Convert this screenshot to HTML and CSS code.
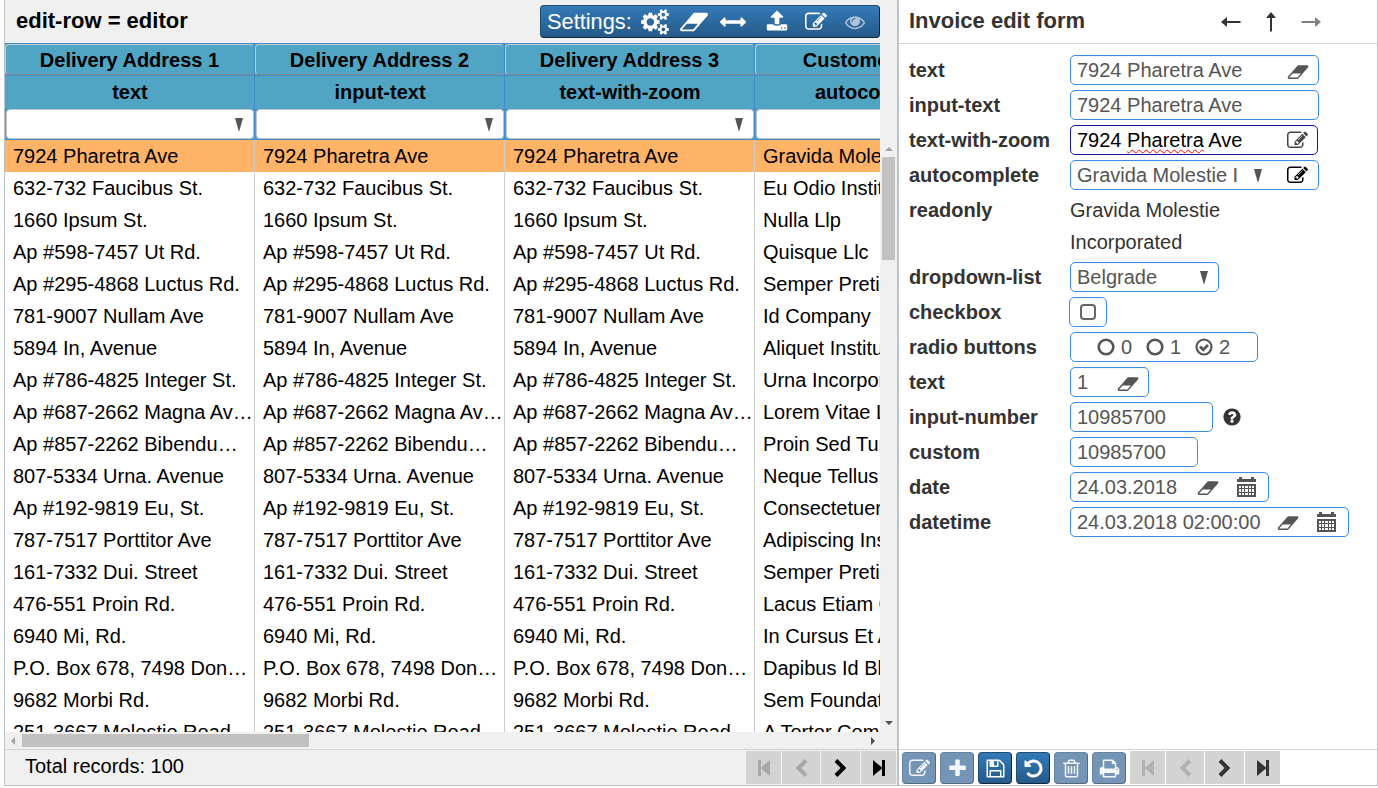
FILE: index.html
```html
<!DOCTYPE html>
<html lang="en">
<head>
<meta charset="utf-8">
<title>Invoice editor</title>
<link rel="stylesheet" href="styles.css">
</head>
<body>
<svg class="defs" aria-hidden="true">
  <symbol id="cogs" viewBox="0 0 1920 1792"><path d="M896 896q0-106-75-181t-181-75-181 75-75 181 75 181 181 75 181-75 75-181zm768 512q0-52-38-90t-90-38-90 38-38 90q0 53 37.500 90.500t90.500 37.500 90.500-37.500 37.500-90.500zm0-1024q0-52-38-90t-90-38-90 38-38 90q0 53 37.500 90.500t90.500 37.500 90.500-37.500 37.500-90.500zm-384 421v185q0 10-7 19.500t-16 10.500l-155 24q-11 35-32 76 34 48 90 115 7 11 7 20 0 12-7 19-23 30-82.500 89.500t-78.500 59.500q-11 0-21-7l-115-90q-37 19-77 31-11 108-23 155-7 24-30 24h-186q-11 0-20-7.500t-10-17.500l-23-153q-34-10-75-31l-118 89q-7 7-20 7-11 0-21-8-144-133-144-160 0-9 7-19 10-14 41-53t47-61q-23-44-35-82l-152-24q-10-1-17-9.500t-7-19.500v-185q0-10 7-19.500t16-10.500l155-24q11-35 32-76-34-48-90-115-7-11-7-20 0-12 7-20 22-30 82-89t79-59q11 0 21 7l115 90q34-18 77-32 11-108 23-154 7-24 30-24h186q11 0 20 7.500t10 17.500l23 153q34 10 75 31l118-89q8-7 20-7 11 0 21 8 144 133 144 160 0 8-7 19-12 16-42 54t-45 60q23 48 34 82l152 23q10 2 17 10.500t7 19.500zm640 533v140q0 16-149 31-12 27-30 52 51 113 51 138 0 4-4 7-122 71-124 71-8 0-46-47t-52-68q-20 2-30 2t-30-2q-14 21-52 68t-46 47q-2 0-124-71-4-3-4-7 0-25 51-138-18-25-30-52-149-15-149-31v-140q0-16 149-31 13-29 30-52-51-113-51-138 0-4 4-7 4-2 35-20t59-34 30-16q8 0 46 46.500t52 67.500q20-2 30-2t30 2q51-71 92-112l6-2q4 0 124 70 4 3 4 7 0 25-51 138 17 23 30 52 149 15 149 31zm0-1024v140q0 16-149 31-12 27-30 52 51 113 51 138 0 4-4 7-122 71-124 71-8 0-46-47t-52-68q-20 2-30 2t-30-2q-14 21-52 68t-46 47q-2 0-124-71-4-3-4-7 0-25 51-138-18-25-30-52-149-15-149-31v-140q0-16 149-31 13-29 30-52-51-113-51-138 0-4 4-7 4-2 35-20t59-34 30-16q8 0 46 46.500t52 67.500q20-2 30-2t30 2q51-71 92-112l6-2q4 0 124 70 4 3 4 7 0 25-51 138 17 23 30 52 149 15 149 31z"/></symbol>
  <symbol id="eraser" viewBox="0 0 2048 1792"><path d="M960 1408l336-384h-768l-336 384h768zm1013-1077q15 34 9.500 71.500t-30.500 65.500l-896 1024q-38 44-96 44h-768q-38 0-69.500-20.500t-47.500-54.500q-15-34-9.500-71.500t30.500-65.500l896-1024q38-44 96-44h768q38 0 69.500 20.500t47.500 54.500z"/></symbol>
  <symbol id="arrows" viewBox="0 0 1792 1792"><path d="M1792 896q0 26-19 45l-256 256q-19 19-45 19t-45-19-19-45v-128h-1024v128q0 26-19 45t-45 19-45-19l-256-256q-19-19-19-45t19-45l256-256q19-19 45-19t45 19 19 45v128h1024v-128q0-26 19-45t45-19 45 19l256 256q19 19 19 45z"/></symbol>
  <symbol id="upload" viewBox="0 0 1792 1792"><path d="M1344 1472q0-26-19-45t-45-19-45 19-19 45 19 45 45 19 45-19 19-45zm256 0q0-26-19-45t-45-19-45 19-19 45 19 45 45 19 45-19 19-45zm128-224v320q0 40-28 68t-68 28h-1472q-40 0-68-28t-28-68v-320q0-40 28-68t68-28h427q21 56 70.500 92t110.500 36h256q61 0 110.500-36t70.500-92h427q40 0 68 28t28 68zm-325-648q-17 40-59 40h-256v448q0 26-19 45t-45 19h-256q-26 0-45-19t-19-45v-448h-256q-42 0-59-40-17-39 14-69l448-448q18-19 45-19t45 19l448 448q31 30 14 69z"/></symbol>
  <symbol id="edit" viewBox="0 0 1792 1792"><path d="M888 1184l116-116-152-152-116 116v56h96v96h56zm440-720q-16-16-33 1l-350 350q-17 17-1 33t33-1l350-350q17-17 1-33zm80 594v190q0 119-84.500 203.500t-203.500 84.500h-832q-119 0-203.500-84.500t-84.500-203.500v-832q0-119 84.500-203.500t203.500-84.500h832q63 0 117 25 15 7 18 23 3 17-9 29l-49 49q-14 14-32 8-23-6-45-6h-832q-66 0-113 47t-47 113v832q0 66 47 113t113 47h832q66 0 113-47t47-113v-126q0-13 9-22l64-64q15-15 35-7t20 29zm-96-738l288 288-672 672h-288v-288zm444 132l-92 92-288-288 92-92q28-28 68-28t68 28l152 152q28 28 28 68t-28 68z"/></symbol>
  <symbol id="eye" viewBox="0 0 1792 1792"><path d="M1664 960q-152-236-381-353 61 104 61 225 0 185-131.500 316.500t-316.500 131.500-316.500-131.500-131.500-316.500q0-121 61-225-229 117-381 353 133 205 333.500 326.500t434.500 121.500 434.500-121.500 333.500-326.500zm-720-384q0-20-14-34t-34-14q-125 0-214.500 89.500t-89.500 214.500q0 20 14 34t34 14 34-14 14-34q0-86 61-147t147-61q20 0 34-14t14-34zm848 384q0 34-20 69-140 230-376.500 368.500t-499.500 138.500-499.500-139-376.500-368q-20-35-20-69t20-69q140-229 376.500-368t499.500-139 499.500 139 376.500 368q20 35 20 69z"/></symbol>
  <symbol id="plus" viewBox="0 0 1792 1792"><path d="M1600 736v192q0 40-28 68t-68 28h-416v416q0 40-28 68t-68 28h-192q-40 0-68-28t-28-68v-416h-416q-40 0-68-28t-28-68v-192q0-40 28-68t68-28h416v-416q0-40 28-68t68-28h192q40 0 68 28t28 68v416h416q40 0 68 28t28 68z"/></symbol>
  <symbol id="save" viewBox="0 0 1792 1792"><path d="M512 1536h768v-384h-768v384zm896 0h128v-896q0-14-10-38.500t-20-34.500l-281-281q-10-10-34-20t-39-10v416q0 40-28 68t-68 28h-576q-40 0-68-28t-28-68v-416h-128v1280h128v-416q0-40 28-68t68-28h832q40 0 68 28t28 68v416zm-384-928v-320q0-13-9.500-22.500t-22.500-9.500h-192q-13 0-22.500 9.500t-9.500 22.500v320q0 13 9.500 22.500t22.500 9.500h192q13 0 22.500-9.500t9.500-22.500zm640 32v928q0 40-28 68t-68 28h-1344q-40 0-68-28t-28-68v-1344q0-40 28-68t68-28h928q40 0 88 20t76 48l280 280q28 28 48 76t20 88z"/></symbol>
  <symbol id="undo" viewBox="0 0 1792 1792"><path d="M1664 896q0 156-61 298t-164 245-245 164-298 61q-172 0-327-72.500t-264-204.500q-7-10-6.500-22.500t8.500-20.500l137-138q10-9 25-9 16 2 23 12 73 95 179 147t225 52q104 0 198.500-40.500t163.500-109.500 109.500-163.500 40.500-198.500-40.500-198.500-109.500-163.500-163.500-109.500-198.500-40.500q-98 0-188 35.500t-160 101.500l137 138q31 30 14 69-17 40-59 40h-448q-26 0-45-19t-19-45v-448q0-42 40-59 39-17 69 14l130 129q107-101 244.500-156.500t284.500-55.500q156 0 298 61t245 164 164 245 61 298z"/></symbol>
  <symbol id="trash" viewBox="0 0 1792 1792"><path d="M704 736v576q0 14-9 23t-23 9h-64q-14 0-23-9t-9-23v-576q0-14 9-23t23-9h64q14 0 23 9t9 23zm256 0v576q0 14-9 23t-23 9h-64q-14 0-23-9t-9-23v-576q0-14 9-23t23-9h64q14 0 23 9t9 23zm256 0v576q0 14-9 23t-23 9h-64q-14 0-23-9t-9-23v-576q0-14 9-23t23-9h64q14 0 23 9t9 23zm128 724v-948h-896v948q0 22 7 40.500t14.500 27 10.500 8.500h832q3 0 10.500-8.500t14.500-27 7-40.500zm-672-1076h448l-48-117q-7-9-17-11h-317q-10 2-17 11zm928 32v64q0 14-9 23t-23 9h-96v948q0 83-47 143.500t-113 60.500h-832q-66 0-113-58.500t-47-141.500v-952h-96q-14 0-23-9t-9-23v-64q0-14 9-23t23-9h309l70-167q15-37 54-63t79-26h320q40 0 79 26t54 63l70 167h309q14 0 23 9t9 23z"/></symbol>
  <symbol id="print" viewBox="0 0 1792 1792"><path d="M448 1536h896v-256h-896v256zm0-640h896v-384h-160q-40 0-68-28t-28-68v-160h-640v640zm1152 64q0-26-19-45t-45-19-45 19-19 45 19 45 45 19 45-19 19-45zm128 0v416q0 13-9.500 22.500t-22.500 9.500h-224v160q0 40-28 68t-68 28h-960q-40 0-68-28t-28-68v-160h-224q-13 0-22.500-9.500t-9.500-22.500v-416q0-79 56.500-135.500t135.500-56.500h64v-544q0-40 28-68t68-28h672q40 0 88 20t76 48l152 152q28 28 48 76t20 88v256h64q79 0 135.500 56.500t56.500 135.500z"/></symbol>
  <symbol id="help" viewBox="0 0 1792 1792"><path d="M1024 1376v-192q0-14-9-23t-23-9h-192q-14 0-23 9t-9 23v192q0 14 9 23t23 9h192q14 0 23-9t9-23zm256-672q0-88-55.500-163t-138.500-116-170-41q-243 0-371 213-15 24 8 42l132 100q7 6 19 6 16 0 25-12 53-68 86-92 34-24 86-24 48 0 85.500 26t37.500 59q0 38-20 61t-68 45q-63 28-115.500 86.500t-52.500 125.500v36q0 14 9 23t23 9h192q14 0 23-9t9-23q0-19 21.500-49.500t54.500-49.500q32-18 49-28.500t46-35 44.500-48 28-60.500 12.500-81zm384 192q0 209-103 385.500t-279.500 279.500-385.500 103-385.500-103-279.500-279.500-103-385.500 103-385.500 279.500-279.500 385.500-103 385.500 103 279.500 279.500 103 385.500z"/></symbol>
  <symbol id="calendar" viewBox="0 0 19 20"><path d="M0 2h19v3H0zM2 0h3v3H2zM14 0h3v3h-3zM0 7h19v13H0z"/><path fill="#fff" d="M2 9h2v2H2zM5 9h2v2H5zM8 9h3v2H8zM12 9h2v2h-2zM15 9h2v2h-2zM2 12h2v3H2zM5 12h2v3H5zM8 12h3v3H8zM12 12h2v3h-2zM15 12h2v3h-2zM2 16h2v2H2zM5 16h2v2H5zM8 16h3v2H8zM12 16h2v2h-2zM15 16h2v2h-2z"/></symbol>
  <symbol id="tri" viewBox="0 0 8 13"><path d="M0 0h8L4.300 13H3.700z"/></symbol>
  <symbol id="next" viewBox="0 0 14 20"><path d="M2 2.500l7.500 7.500L2 17.500" fill="none" stroke="currentColor" stroke-width="4"/></symbol>
  <symbol id="last" viewBox="0 0 14 18"><path d="M1 1l9.500 8L1 17zM10 1h3v16h-3z"/></symbol>
  <symbol id="arrow" viewBox="0 0 20 10"><path d="M0 5l6-5V4h13.500v2H6v4z"/></symbol>
  <symbol id="ring" viewBox="0 0 18 18"><circle cx="9" cy="9" r="7.300" fill="none" stroke="currentColor" stroke-width="2.600"/></symbol>
  <symbol id="ringcheck" viewBox="0 0 18 18"><circle cx="9" cy="9" r="7.500" fill="none" stroke="currentColor" stroke-width="2.200"/><path d="M5 8.500l3.200 3.300L13 7" fill="none" stroke="currentColor" stroke-width="2.800"/></symbol>
</svg>
<main class="app">
  <section class="grid">
    <header class="grid-title"><h1>edit-row = editor</h1>
      <div class="settings"><span>Settings:</span>
        <svg class="s-cogs"><use href="#cogs"/></svg><svg class="s-eraser"><use href="#eraser"/></svg><svg class="s-arrows"><use href="#arrows"/></svg><svg class="s-upload"><use href="#upload"/></svg><svg class="s-edit"><use href="#edit"/></svg><svg class="s-eye"><use href="#eye"/></svg>
      </div>
    </header>
    <div class="table-head">
      <div class="row head"><b><i>Delivery Address 1</i></b><b><i>Delivery Address 2</i></b><b><i>Delivery Address 3</i></b><b><i>Customer Name</i></b></div>
      <div class="row kind"><b>text</b><b>input-text</b><b>text-with-zoom</b><b>autocomplete</b></div>
      <div class="row filter"><b><i><svg class="tri"><use href="#tri"/></svg></i></b><b><i><svg class="tri"><use href="#tri"/></svg></i></b><b><i><svg class="tri"><use href="#tri"/></svg></i></b><b><i></i></b></div>
    </div>
    <div class="body-wrap">
      <div class="table-body">
        <div class="row sel"><span>7924 Pharetra Ave</span><span>7924 Pharetra Ave</span><span>7924 Pharetra Ave</span><span>Gravida Molestie Incorporated</span></div>
        <div class="row"><span>632-732 Faucibus St.</span><span>632-732 Faucibus St.</span><span>632-732 Faucibus St.</span><span>Eu Odio Institute</span></div>
        <div class="row"><span>1660 Ipsum St.</span><span>1660 Ipsum St.</span><span>1660 Ipsum St.</span><span>Nulla Llp</span></div>
        <div class="row"><span>Ap #598-7457 Ut Rd.</span><span>Ap #598-7457 Ut Rd.</span><span>Ap #598-7457 Ut Rd.</span><span>Quisque Llc</span></div>
        <div class="row"><span>Ap #295-4868 Luctus Rd.</span><span>Ap #295-4868 Luctus Rd.</span><span>Ap #295-4868 Luctus Rd.</span><span>Semper Pretium</span></div>
        <div class="row"><span>781-9007 Nullam Ave</span><span>781-9007 Nullam Ave</span><span>781-9007 Nullam Ave</span><span>Id Company</span></div>
        <div class="row"><span>5894 In, Avenue</span><span>5894 In, Avenue</span><span>5894 In, Avenue</span><span>Aliquet Institute</span></div>
        <div class="row"><span>Ap #786-4825 Integer St.</span><span>Ap #786-4825 Integer St.</span><span>Ap #786-4825 Integer St.</span><span>Urna Incorporated</span></div>
        <div class="row"><span>Ap #687-2662 Magna Avenue</span><span>Ap #687-2662 Magna Avenue</span><span>Ap #687-2662 Magna Avenue</span><span>Lorem Vitae Ltd</span></div>
        <div class="row"><span>Ap #857-2262 Bibendum St.</span><span>Ap #857-2262 Bibendum St.</span><span>Ap #857-2262 Bibendum St.</span><span>Proin Sed Turpis</span></div>
        <div class="row"><span>807-5334 Urna. Avenue</span><span>807-5334 Urna. Avenue</span><span>807-5334 Urna. Avenue</span><span>Neque Tellus</span></div>
        <div class="row"><span>Ap #192-9819 Eu, St.</span><span>Ap #192-9819 Eu, St.</span><span>Ap #192-9819 Eu, St.</span><span>Consectetuer</span></div>
        <div class="row"><span>787-7517 Porttitor Ave</span><span>787-7517 Porttitor Ave</span><span>787-7517 Porttitor Ave</span><span>Adipiscing Institute</span></div>
        <div class="row"><span>161-7332 Dui. Street</span><span>161-7332 Dui. Street</span><span>161-7332 Dui. Street</span><span>Semper Pretium</span></div>
        <div class="row"><span>476-551 Proin Rd.</span><span>476-551 Proin Rd.</span><span>476-551 Proin Rd.</span><span>Lacus Etiam Corp.</span></div>
        <div class="row"><span>6940 Mi, Rd.</span><span>6940 Mi, Rd.</span><span>6940 Mi, Rd.</span><span>In Cursus Et Associates</span></div>
        <div class="row"><span>P.O. Box 678, 7498 Donec Rd.</span><span>P.O. Box 678, 7498 Donec Rd.</span><span>P.O. Box 678, 7498 Donec Rd.</span><span>Dapibus Id Blandit</span></div>
        <div class="row"><span>9682 Morbi Rd.</span><span>9682 Morbi Rd.</span><span>9682 Morbi Rd.</span><span>Sem Foundation</span></div>
        <div class="row"><span>251-3667 Molestie Road</span><span>251-3667 Molestie Road</span><span>251-3667 Molestie Road</span><span>A Tortor Company</span></div>
      </div>
      <div class="vscroll"><i class="up"></i><i class="vthumb"></i><i class="down"></i></div>
    </div>
    <div class="hscroll"><i class="left"></i><i class="hthumb"></i><i class="right"></i></div>
    <footer class="grid-foot"><span>Total records: 100</span>
      <nav class="pager"><a class="off"><svg class="flip last"><use href="#last"/></svg></a><a class="off"><svg class="flip next"><use href="#next"/></svg></a><a><svg class="next"><use href="#next"/></svg></a><a><svg class="last"><use href="#last"/></svg></a></nav>
    </footer>
  </section>
  <section class="form">
    <header class="form-title"><h1>Invoice edit form</h1><svg class="arr"><use href="#arrow"/></svg><svg class="arr turn-up"><use href="#arrow"/></svg><svg class="arr flip off"><use href="#arrow"/></svg></header>
    <div class="fields">
      <label>text</label><div><div class="inp w249">7924 Pharetra Ave<svg class="eraser"><use href="#eraser"/></svg></div></div>
      <label>input-text</label><div><div class="inp w249">7924 Pharetra Ave</div></div>
      <label>text-with-zoom</label><div><div class="inp w248 focus"><span>7924 <u>Pharetra</u> Ave</span><svg class="edit"><use href="#edit"/></svg></div></div>
      <label>autocomplete</label><div><div class="inp w249"><span class="clip">Gravida Molestie Incorporated</span><svg class="tri"><use href="#tri"/></svg><svg class="edit black"><use href="#edit"/></svg></div></div>
      <label class="top">readonly</label><div class="readonly">Gravida Molestie<br>Incorporated</div>
      <label>dropdown-list</label><div><div class="inp w149">Belgrade<svg class="tri"><use href="#tri"/></svg></div></div>
      <label>checkbox</label><div><div class="inp check"><i></i></div></div>
      <label>radio buttons</label><div><div class="inp radios"><svg><use href="#ring"/></svg><span>0</span><svg><use href="#ring"/></svg><span>1</span><svg><use href="#ringcheck"/></svg><span>2</span></div></div>
      <label>text</label><div><div class="inp w79">1<svg class="eraser"><use href="#eraser"/></svg></div></div>
      <label>input-number</label><div><div class="inp w143">10985700</div><svg class="help"><use href="#help"/></svg></div>
      <label>custom</label><div><div class="inp w128">10985700</div></div>
      <label>date</label><div><div class="inp w199">24.03.2018<svg class="eraser"><use href="#eraser"/></svg><svg class="cal"><use href="#calendar"/></svg></div></div>
      <label>datetime</label><div><div class="inp w279">24.03.2018 02:00:00<svg class="eraser"><use href="#eraser"/></svg><svg class="cal"><use href="#calendar"/></svg></div></div>
    </div>
    <footer class="form-foot">
      <button class="off"><svg><use href="#edit"/></svg></button><button class="off"><svg><use href="#plus"/></svg></button><button><svg><use href="#save"/></svg></button><button><svg><use href="#undo"/></svg></button><button class="off"><svg><use href="#trash"/></svg></button><button class="off"><svg><use href="#print"/></svg></button>
      <nav class="pager"><a class="off"><svg class="flip last"><use href="#last"/></svg></a><a class="off"><svg class="flip next"><use href="#next"/></svg></a><a><svg class="next"><use href="#next"/></svg></a><a><svg class="last"><use href="#last"/></svg></a></nav>
    </footer>
  </section>
</main>
</body>
</html>
```
FILE: styles.css
```css
* { box-sizing: border-box; }
body { margin: 0; background: #fff; font: 20px/32px "Liberation Sans", Arial, sans-serif; color: #000; overflow: hidden; }
svg { display: block; flex: none; fill: currentColor; }
i { font-style: normal; }
h1 { margin: 0; font-size: 22px; font-weight: bold; white-space: nowrap; }
.defs { display: none; }
.flip { transform: scaleX(-1); }
.app { display: flex; width: 1374px; height: 786px; margin-left: 4px; border: 1px solid #b8c4c8; border-top: 0; }

.grid { width: 892px; display: flex; flex-direction: column; background: #f0f0f0; }
.grid-title { height: 43px; flex: none; display: flex; align-items: flex-start; justify-content: space-between; padding: 5px 17px 0 11px; }
.grid-title h1 { line-height: 31px; }
.settings { display: flex; align-items: center; width: 340px; height: 33px; padding-left: 6px; border: 1px solid #204d74; border-right-color: #10263a; border-bottom-color: #10263a; border-radius: 4px; background: linear-gradient(#337ab7, #265a88); color: #fff; font-size: 21.800px; }
.settings span { width: 94px; padding-top: 1px; }
.s-cogs { width: 28px; height: 26px; }
.s-eraser { width: 30px; height: 26px; margin-left: 10px; }
.s-arrows { width: 26px; height: 26px; margin-left: 11px; }
.s-upload { width: 22px; height: 22px; margin: 0 0 2px 20px; }
.s-edit { width: 22px; height: 22px; margin-left: 17px; }
.s-eye { width: 20px; height: 20px; margin-left: 18px; opacity: .6; }

.table-head { height: 97px; width: 875px; flex: none; overflow: hidden; background: #51a5c4; border-top: 1px solid #428bca; }
.row { display: grid; grid-template-columns: repeat(4, 250px); width: 1000px; height: 32px; }
.row b { border-right: 1px solid #428bca; border-bottom: 1px solid #428bca; text-align: center; line-height: 31px; }
.row.kind b { padding-left: 1px; line-height: 33px; }
.head i { display: block; height: 31px; border: 1px solid #c3cdd0; border-right-color: #858f93; border-bottom-color: #858f93; border-radius: 4px; line-height: 31px; }
.filter i { display: flex; justify-content: flex-end; align-items: center; height: 30px; margin: 1px 0 0 1px; padding-right: 10px; background: #fff; border: 1px solid #c4c4c4; border-radius: 4px; }
.tri { width: 8px; height: 13px; color: #555; }

.body-wrap { height: 592px; flex: none; display: flex; }
.table-body { width: 875px; height: 592px; overflow: hidden; background: #fff; }
.row span { padding: 0 1px 0 8px; border-right: 1px solid #ccc; overflow: hidden; text-overflow: ellipsis; white-space: nowrap; }
.sel { background: #ffb366; }
.vscroll { width: 17px; padding: 7px 0 7px 2px; display: flex; flex-direction: column; }
.vscroll i { margin-left: 3px; }
.up { border: 4px solid transparent; border-top: 0; border-bottom-color: #a3a3a3; width: 8px; }
.vscroll .vthumb { width: 13px; height: 103px; margin: 6px 0 auto; background: #c1c1c1; }
.down { border: 4px solid transparent; border-bottom: 0; border-top-color: #505050; width: 8px; }
.hscroll { height: 17px; flex: none; display: flex; align-items: center; padding: 0 22px 0 6px; }
.left { border: 4px solid transparent; border-left: 0; border-right-color: #a3a3a3; }
.hthumb { width: 287px; height: 13px; margin: 0 auto 0 7px; background: #c1c1c1; }
.right { border: 4px solid transparent; border-right: 0; border-left-color: #505050; }
.grid-foot { height: 36px; flex: none; display: flex; justify-content: space-between; border-top: 1px solid #d3d3d3; padding: 1px 1px 0 20px; }
.grid-foot span { line-height: 31px; }
.pager { display: grid; grid-template-columns: 35px 38px 39px 35px; gap: 1px; height: 33px; }
.pager a { display: flex; align-items: center; justify-content: center; background: #d3d3d3; }
.pager .off svg { opacity: .2; }
.next { width: 14px; height: 20px; }
.last { width: 14px; height: 18px; }

.form { flex: 1; display: flex; flex-direction: column; border-left: 2px solid #b8c4c8; color: #333; }
.form-title { height: 44px; flex: none; display: flex; align-items: center; padding-left: 10px; border-bottom: 1px solid #d3d3d3; }
.form-title h1 { width: 312px; padding-bottom: 2px; }
.arr { width: 20px; height: 10px; margin-right: 20px; }
.arr.off { color: #808080; }
.turn-up { transform: rotate(90deg); }
.fields { flex: 1; display: grid; grid-template-columns: 161px 1fr; grid-template-rows: repeat(4, 30px) 62px repeat(8, 30px); gap: 5px 0; padding: 11px 0 0 10px; }
.fields label { font-weight: bold; line-height: 30px; }
.fields > div { display: flex; }
.fields > .readonly { display: block; margin: -1px 0; }
.inp { display: flex; align-items: center; height: 30px; padding: 0 6px; border: 1px solid #3a8ee6; border-radius: 5px; color: #555; line-height: 28px; white-space: nowrap; box-shadow: inset 0 1px 1px #0000000d; }
.w249 { width: 249px; }
.w248 { width: 248px; }
.w149 { width: 149px; }
.w79 { width: 79px; }
.w143 { width: 143px; }
.w128 { width: 128px; }
.w199 { width: 199px; }
.w279 { width: 279px; }
.focus { border-color: #1414a0; color: #000; }
.focus u { text-decoration: underline wavy #f00 1px; text-underline-offset: 2px; text-decoration-skip-ink: none; }
.clip { width: 162px; overflow: hidden; }
.inp .eraser { width: 22px; height: 20px; margin: 3px 3px 0 auto; }
.inp .cal { width: 19px; height: 20px; margin-left: 15px; margin-right: 6px; }
.w199 .eraser, .w279 .eraser { margin-top: 1px; }
.inp .edit { width: 21px; height: 21px; margin: 0 3px 0 auto; color: #444; }
.inp .black { color: #000; margin: 1px 4px 0 auto; }
.inp .tri { margin-left: auto; }
.w149 .tri { margin-right: 4px; }
.inp .clip + .tri { margin-left: 15px; }
.check { width: 38px; margin-left: -1px; padding-left: 10px; }
.check i { width: 16px; height: 16px; border: 2px solid #666; border-radius: 4px; }
.radios { width: 188px; padding-left: 26px; }
.radios svg { width: 18px; height: 18px; }
.radios span { width: 25px; margin-left: 6px; }
.help { width: 20px; height: 20px; margin: 5px 0 0 9px; }
.form-foot { height: 36px; flex: none; display: flex; padding: 2px 0 0 3px; border-top: 1px solid #d3d3d3; }
.form-foot button { display: flex; align-items: center; justify-content: center; width: 34px; height: 32px; margin-right: 4px; padding: 0; border: 1px solid #204d74; border-right-color: #10263a; border-bottom-color: #10263a; border-radius: 4px; background: linear-gradient(#337ab7, #265a88); color: #fff; }
.form-foot button svg { width: 21px; height: 21px; }
.form-foot button.off { background: #7495b6; border-color: #6883a0 #566a7e #566a7e #6883a0; color: #f4f7fa; }
.form-foot .pager { margin-top: -1px; }
```
